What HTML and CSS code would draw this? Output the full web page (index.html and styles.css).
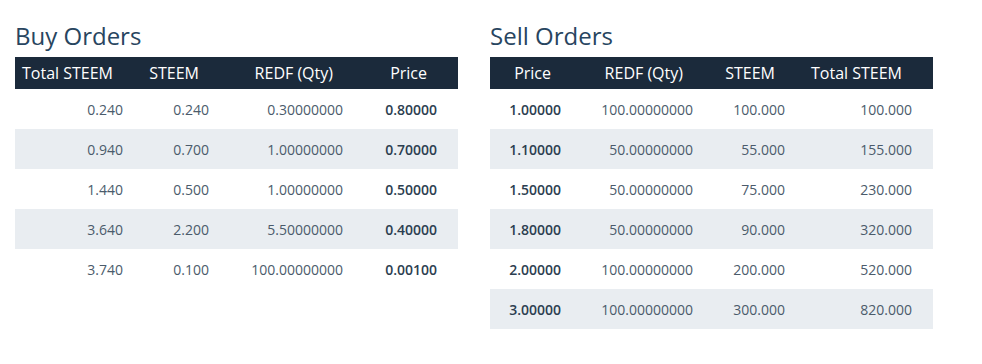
FILE: index.html
```html
<!DOCTYPE html>
<html lang="en">
<head>
<meta charset="utf-8">
<title>Orders</title>
<link rel="stylesheet" href="styles.css">
</head>
<body>
<div class="page">
  <section class="book buy">
    <h2 class="title">Buy Orders</h2>
    <div class="table">
      <div class="row head"><div>Total STEEM</div><div>STEEM</div><div>REDF (Qty)</div><div>Price</div></div>
      <div class="row"><div>0.240</div><div>0.240</div><div>0.30000000</div><div class="price">0.80000</div></div>
      <div class="row alt"><div>0.940</div><div>0.700</div><div>1.00000000</div><div class="price">0.70000</div></div>
      <div class="row"><div>1.440</div><div>0.500</div><div>1.00000000</div><div class="price">0.50000</div></div>
      <div class="row alt"><div>3.640</div><div>2.200</div><div>5.50000000</div><div class="price">0.40000</div></div>
      <div class="row"><div>3.740</div><div>0.100</div><div>100.00000000</div><div class="price">0.00100</div></div>
    </div>
  </section>
  <section class="book sell">
    <h2 class="title">Sell Orders</h2>
    <div class="table">
      <div class="row head"><div>Price</div><div>REDF (Qty)</div><div>STEEM</div><div>Total STEEM</div></div>
      <div class="row"><div class="price">1.00000</div><div>100.00000000</div><div>100.000</div><div>100.000</div></div>
      <div class="row alt"><div class="price">1.10000</div><div>50.00000000</div><div>55.000</div><div>155.000</div></div>
      <div class="row"><div class="price">1.50000</div><div>50.00000000</div><div>75.000</div><div>230.000</div></div>
      <div class="row alt"><div class="price">1.80000</div><div>50.00000000</div><div>90.000</div><div>320.000</div></div>
      <div class="row"><div class="price">2.00000</div><div>100.00000000</div><div>200.000</div><div>520.000</div></div>
      <div class="row alt"><div class="price">3.00000</div><div>100.00000000</div><div>300.000</div><div>820.000</div></div>
    </div>
  </section>
</div>
</body>
</html>
```

FILE: styles.css
```css
html, body {
  margin: 0;
  padding: 0;
  background: #ffffff;
}

body {
  font-family: "Open Sans", "Liberation Sans", sans-serif;
  color: #4b5b6b;
}

.page {
  display: flex;
  gap: 32px;
  padding: 21px 15px 0 15px;
}

.book {
  width: 443px;
}

.title {
  margin: 0 0 6px 0;
  font-size: 24px;
  line-height: 30px;
  font-weight: 500;
  color: #284560;
}

.table {
  display: flex;
  flex-direction: column;
}

.row {
  display: grid;
  height: 40px;
  align-items: center;
  font-size: 14px;
  color: #4b5b6b;
}

.buy .row {
  grid-template-columns: 129px 86px 134px 94px;
}

.sell .row {
  grid-template-columns: 92px 132px 92px 127px;
}

.row > div {
  text-align: right;
  padding-right: 21px;
  white-space: nowrap;
}

.row.alt {
  background: #e9edf1;
}

.row.head {
  height: 32px;
  background: #1b2a3b;
  color: #ffffff;
  font-size: 16px;
}

.row.head > div {
  padding-right: 31px;
}

.price {
  font-weight: 600;
  color: #2c3e50;
}
```
